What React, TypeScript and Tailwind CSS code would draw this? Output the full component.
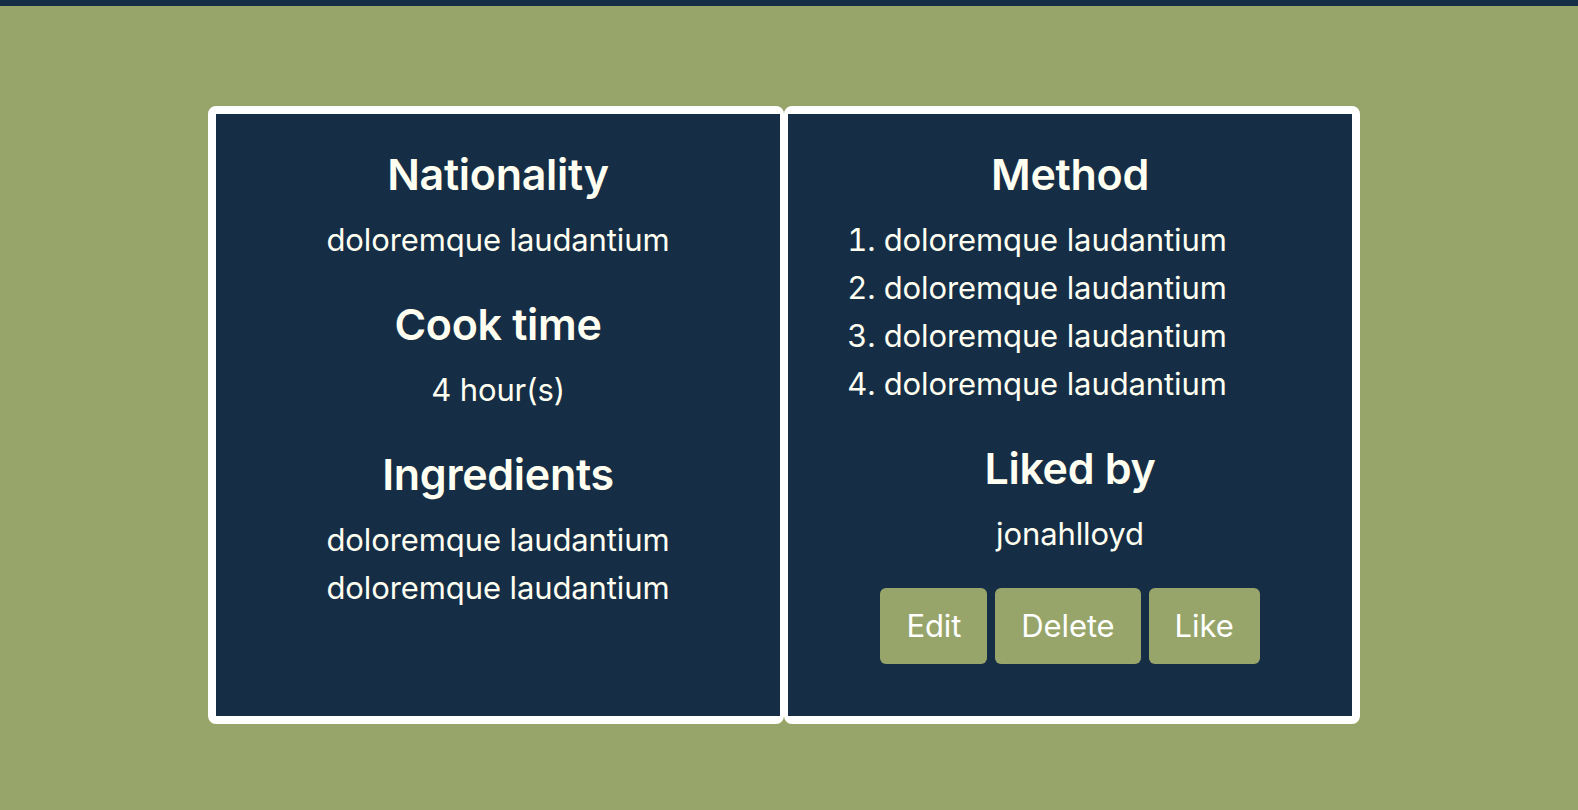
import React from "react";

const font = { fontFamily: "Inter, 'Noto Sans', 'Liberation Sans', sans-serif" };

export default function App() {
  const methods = ["doloremque laudantium", "doloremque laudantium", "doloremque laudantium", "doloremque laudantium"];
  return (
    <div className="min-h-[810px] w-full bg-[#97a56a] text-[#fffff2]" style={font}>
      <div className="h-[6px] w-full bg-[#152e45]" />
      <div className="ml-[208px] mt-[100px] grid w-[1152px] grid-cols-2">
        <div className="h-[618px] rounded-lg border-8 border-r-4 border-white bg-[#162e45] pt-[35px] text-center">
          <h2 className="text-[43px] font-semibold leading-[50px] tracking-[-0.3px]">Nationality</h2>
          <p className="mt-[17px] text-[31px] leading-[48px] tracking-[-0.1px]">doloremque laudantium</p>
          <h2 className="mt-[35px] text-[43px] font-semibold leading-[50px] tracking-[-0.3px]">Cook time</h2>
          <p className="mt-[17px] text-[31px] leading-[48px] tracking-[-0.1px]">4 hour(s)</p>
          <h2 className="mt-[35px] text-[43px] font-semibold leading-[50px] tracking-[-0.3px]">Ingredients</h2>
          <div className="mt-[17px] text-[31px] leading-[48px] tracking-[-0.1px]">
            <p>doloremque laudantium</p>
            <p>doloremque laudantium</p>
          </div>
        </div>
        <div className="h-[618px] rounded-lg border-8 border-l-4 border-white bg-[#162e45] pt-[35px] text-center">
          <h2 className="text-[43px] font-semibold leading-[50px] tracking-[-0.3px]">Method</h2>
          <ol className="mt-[17px] list-inside list-decimal pr-[66px] text-[31px] leading-[48px] tracking-[-0.1px]">
            {methods.map((m, i) => (
              <li key={i}>{m}</li>
            ))}
          </ol>
          <h2 className="mt-[35px] text-[43px] font-semibold leading-[50px] tracking-[-0.3px]">Liked by</h2>
          <p className="mt-[17px] text-[31px] leading-[48px] tracking-[-0.1px]">jonahlloyd</p>
          <div className="mt-[30px] flex justify-center gap-2">
            <button className="h-[76px] rounded-md bg-[#97a56a] px-[26px] text-[31px] tracking-[-0.1px] text-white">Edit</button>
            <button className="h-[76px] rounded-md bg-[#97a56a] px-[26px] text-[31px] tracking-[-0.1px] text-white">Delete</button>
            <button className="h-[76px] rounded-md bg-[#97a56a] px-[26px] text-[31px] tracking-[-0.1px] text-white">Like</button>
          </div>
        </div>
      </div>
    </div>
  );
}
